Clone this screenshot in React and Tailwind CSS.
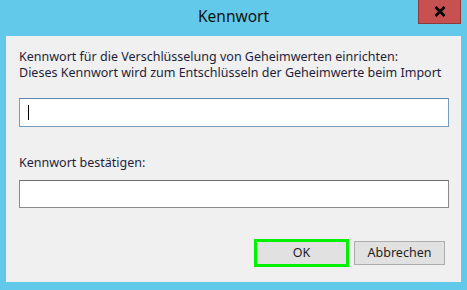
export default function App() {
  const font = { fontFamily: '"Noto Sans", "Open Sans", sans-serif' };

  return (
    <div
      className="w-[467px] h-[290px] bg-[#63c9eb] flex flex-col text-[#1e1e1e]"
      style={font}
    >
      {/* title bar */}
      <div className="relative h-[36px] flex items-center justify-center">
        <span className="text-[15.5px] text-[#111] -mt-[2px]">Kennwort</span>
        <button className="absolute top-0 right-[6px] w-[43px] h-[24px] bg-[#c75050] border border-[#8c3a3a] border-t-0 flex items-center justify-center">
          <svg width="12" height="11" viewBox="0 0 12 11">
            <path d="M1.5 1 L10.5 10 M10.5 1 L1.5 10" stroke="#000" strokeWidth="2.6" />
          </svg>
        </button>
      </div>

      {/* body */}
      <div className="mx-[6px] h-[246px] bg-[#f0f0f0] flex flex-col pl-[13px] pr-[12px] pt-[13px]">
        <p className="text-[12.5px] leading-[16px] text-[#1e1e3c]">
          Kennwort für die Verschlüsselung von Geheimwerten einrichten:
          <br />
          Dieses Kennwort wird zum Entschlüsseln der Geheimwerte beim Import
        </p>

        <div className="mt-[17px] h-[29px] bg-white border border-[#7a9cbc] border-t-[#5f86ad] flex items-center pl-[8px]">
          <div className="w-px h-[15px] bg-black" />
        </div>

        <p className="mt-[28px] text-[12.5px] leading-[16px] text-[#1e1e3c]">
          Kennwort bestätigen:
        </p>

        <div className="mt-[9px] h-[28px] bg-white border border-[#8a8a8a] border-t-[#6e6e6e]" />

        <div className="mt-[31px] flex items-center justify-end gap-[5px] pr-[4px]">
          <button className="w-[95px] h-[28px] border-[3px] border-[#00f000] bg-[#e1e1e1] text-[12.5px] text-[#1e1e1e] flex items-center justify-center">
            OK
          </button>
          <button className="w-[91px] h-[24px] border border-[#adadad] bg-[#e1e1e1] text-[12.5px] text-[#1e1e1e] flex items-center justify-center">
            Abbrechen
          </button>
        </div>
      </div>
    </div>
  );
}
